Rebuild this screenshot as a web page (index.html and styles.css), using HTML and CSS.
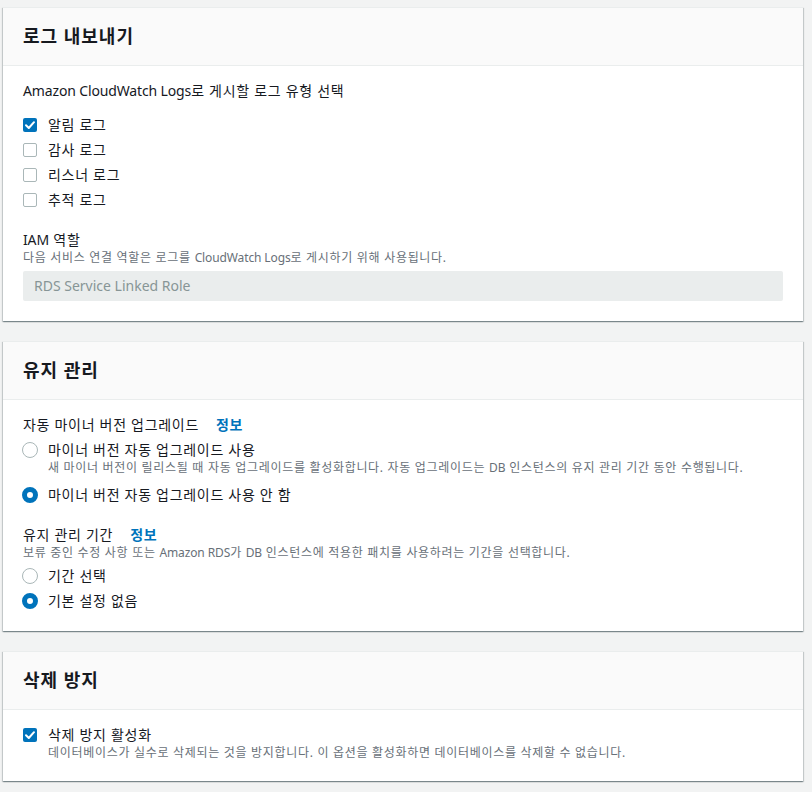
FILE: index.html
```html
<!DOCTYPE html>
<html lang="ko">
<head>
    <meta charset="UTF-8">
    <meta name="viewport" content="width=device-width, initial-scale=1.0">
    <title>추가 구성</title>
    <link rel="stylesheet" href="styles.css">
</head>
<body>
    <div class="page">

        <!-- 로그 내보내기 -->
        <section class="panel">
            <div class="panel-header">
                <h2>로그 내보내기</h2>
            </div>
            <div class="panel-body">
                <div class="field-label"><span class="latin">Amazon CloudWatch Logs</span>로 게시할 로그 유형 선택</div>
                <div class="option-list check-list">
                    <label class="option">
                        <span class="control"><span class="checkbox checked"><svg viewBox="0 0 14 14" width="14" height="14"><polyline points="3,7.3 5.8,10 11,4.2" fill="none" stroke="#fff" stroke-width="2" stroke-linecap="round" stroke-linejoin="round"/></svg></span></span>
                        <span class="option-text">알림 로그</span>
                    </label>
                    <label class="option">
                        <span class="control"><span class="checkbox"></span></span>
                        <span class="option-text">감사 로그</span>
                    </label>
                    <label class="option">
                        <span class="control"><span class="checkbox"></span></span>
                        <span class="option-text">리스너 로그</span>
                    </label>
                    <label class="option">
                        <span class="control"><span class="checkbox"></span></span>
                        <span class="option-text">추적 로그</span>
                    </label>
                </div>

                <div class="field-label iam-label"><span class="latin">IAM</span>&nbsp;역할</div>
                <div class="field-desc">다음 서비스 연결 역할은 로그를 <span class="latin">CloudWatch Logs</span>로 게시하기 위해 사용됩니다.</div>
                <div class="readonly-input">RDS Service Linked Role</div>
            </div>
        </section>

        <!-- 유지 관리 -->
        <section class="panel">
            <div class="panel-header">
                <h2>유지 관리</h2>
            </div>
            <div class="panel-body">
                <div class="field-label">자동 마이너 버전 업그레이드<a class="info-link" href="#">정보</a></div>
                <div class="option-list">
                    <label class="option has-desc">
                        <span class="control"><span class="radio"></span></span>
                        <span class="option-text">
                            마이너 버전 자동 업그레이드 사용
                            <span class="option-desc">새 마이너 버전이 릴리스될 때 자동 업그레이드를 활성화합니다. 자동 업그레이드는 <span class="latin">DB</span> 인스턴스의 유지 관리 기간 동안 수행됩니다.</span>
                        </span>
                    </label>
                    <label class="option">
                        <span class="control"><span class="radio checked"></span></span>
                        <span class="option-text">마이너 버전 자동 업그레이드 사용 안 함</span>
                    </label>
                </div>

                <div class="field-label window-label">유지 관리 기간<a class="info-link" href="#">정보</a></div>
                <div class="field-desc">보류 중인 수정 사항 또는 <span class="latin">Amazon RDS</span>가 <span class="latin">DB</span> 인스턴스에 적용한 패치를 사용하려는 기간을 선택합니다.</div>
                <div class="option-list">
                    <label class="option">
                        <span class="control"><span class="radio"></span></span>
                        <span class="option-text">기간 선택</span>
                    </label>
                    <label class="option">
                        <span class="control"><span class="radio checked"></span></span>
                        <span class="option-text">기본 설정 없음</span>
                    </label>
                </div>
            </div>
        </section>

        <!-- 삭제 방지 -->
        <section class="panel">
            <div class="panel-header">
                <h2>삭제 방지</h2>
            </div>
            <div class="panel-body">
                <label class="option">
                    <span class="control"><span class="checkbox checked"><svg viewBox="0 0 14 14" width="14" height="14"><polyline points="3,7.3 5.8,10 11,4.2" fill="none" stroke="#fff" stroke-width="2" stroke-linecap="round" stroke-linejoin="round"/></svg></span></span>
                    <span class="option-text">
                        삭제 방지 활성화
                        <span class="option-desc">데이터베이스가 실수로 삭제되는 것을 방지합니다. 이 옵션을 활성화하면 데이터베이스를 삭제할 수 없습니다.</span>
                    </span>
                </label>
            </div>
        </section>

    </div>
</body>
</html>
```

FILE: styles.css
```css
body {
    margin: 0;
    background-color: #f2f3f3;
    font-family: 'Noto Sans', 'Noto Sans CJK KR', sans-serif;
    font-size: 14px;
    color: #16191f;
    letter-spacing: 0.05em;
}
.latin {
    letter-spacing: -0.01em;
}
.page {
    padding: 7px 9px 0 3px;
}
.panel {
    width: 800px;
    background-color: #fff;
    border-top: 1px solid #eaeded;
    box-shadow: 0 1px 1px 0 rgba(0, 28, 36, 0.3), 1px 1px 1px 0 rgba(0, 28, 36, 0.15), -1px 1px 1px 0 rgba(0, 28, 36, 0.15);
    margin-bottom: 20px;
}
.panel-header {
    background-color: #fafafa;
    border-bottom: 1px solid #eaeded;
    padding: 18px 20px 19px;
}
.panel-header h2 {
    margin: 0;
    font-size: 18px;
    line-height: 20px;
    font-weight: 700;
    letter-spacing: 0.055em;
}
.panel-body {
    padding: 15px 20px 20px;
}
.field-label {
    line-height: 20px;
    display: flex;
    align-items: center;
}
.iam-label {
    margin-top: 20px;
}
.window-label {
    margin-top: 20px;
}
.field-desc {
    font-size: 12px;
    line-height: 16px;
    color: #687078;
    letter-spacing: 0.058em;
}
.info-link {
    margin-left: 17px;
    color: #0073bb;
    font-weight: 700;
    text-decoration: none;
}
.option-list {
    display: flex;
    flex-direction: column;
    gap: 5px;
    margin-top: 5px;
}
.check-list {
    margin-top: 14px;
}
.option {
    display: flex;
    align-items: flex-start;
    line-height: 20px;
}
.option.has-desc {
    margin-bottom: 4px;
}
.control {
    width: 16px;
    height: 20px;
    margin-left: -1px;
    margin-right: 10px;
    display: flex;
    align-items: center;
    justify-content: center;
    flex-shrink: 0;
}
.option-text {
    display: flex;
    flex-direction: column;
}
.option-desc {
    font-size: 12px;
    line-height: 16px;
    color: #687078;
    letter-spacing: 0.058em;
}
.checkbox {
    width: 14px;
    height: 14px;
    box-sizing: border-box;
    border: 1px solid #aab7b8;
    border-radius: 2px;
    background-color: #fff;
    display: block;
}
.checkbox.checked {
    border: none;
    background-color: #0073bb;
}
.checkbox svg {
    display: block;
}
.radio {
    width: 16px;
    height: 16px;
    box-sizing: border-box;
    border: 1.5px solid #aab7b8;
    border-radius: 50%;
    background-color: #fff;
    display: block;
}
.radio.checked {
    border: 5px solid #0073bb;
}
.readonly-input {
    margin-top: 5px;
    height: 30px;
    line-height: 30px;
    padding: 0 11px;
    background-color: #eaeded;
    border-radius: 2px;
    color: #879596;
    letter-spacing: normal;
}
```
